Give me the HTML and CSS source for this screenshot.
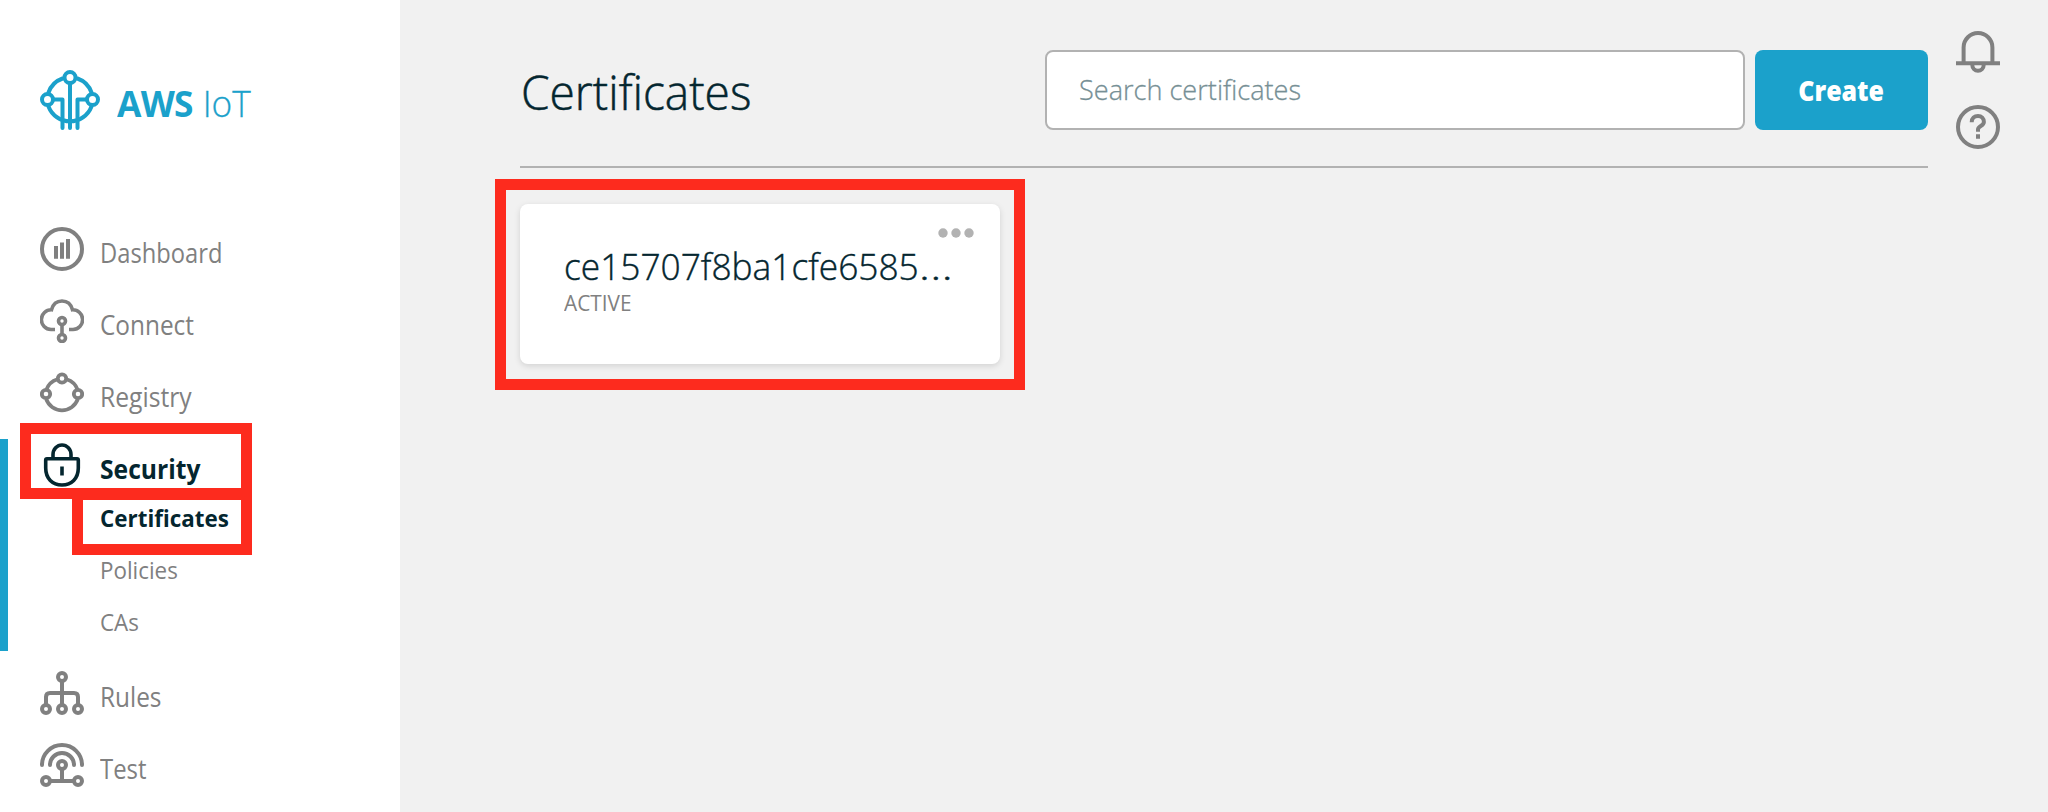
FILE: index.html
```html
<!DOCTYPE html>
<html lang="en">
<head>
<meta charset="utf-8">
<title>AWS IoT - Certificates</title>
<link rel="stylesheet" href="styles.css">
</head>
<body>
<div class="app">
  <aside class="sidebar">
    <div class="brand">
      <svg class="brand-icon" viewBox="0 0 60 60" fill="none" stroke="currentColor" stroke-width="4" stroke-linecap="round">
        <path d="M22.5 8.5A23 23 0 0 0 8.5 22.5M37.500 8.500A23 23 0 0 1 51.500 22.500M8.500 36.500A23 23 0 0 0 51.500 36.500"/>
        <circle cx="30" cy="7.500" r="5.500"/><circle cx="7.500" cy="29.500" r="5.500"/><circle cx="52.500" cy="29.500" r="5.500"/>
        <path d="M30 14V58M14 29.500H22.500V58M46 29.500H37.500V58" stroke-linejoin="round"/>
      </svg>
      <div class="brand-name"><b class="brand-aws">AWS</b><span class="brand-iot">IoT</span></div>
    </div>
    <nav class="nav">
      <a class="nav-row">
        <svg class="icon" viewBox="0 0 44 44" fill="none" stroke="currentColor" stroke-width="4"><circle cx="22" cy="22" r="20"/><path d="M16 19V31.700M22 15.500V31.700M28 12V31.700"/></svg>
        <span class="label dashboard">Dashboard</span>
      </a>
      <a class="nav-row">
        <svg class="icon" viewBox="0 0 44 44" fill="none" stroke="currentColor" stroke-width="3.600"><path d="M15 30.500H11A9.300 9.300 0 0 1 11.500 10.800C13 5 17 2 22 2S31 5 32.500 10.800A9.300 9.300 0 0 1 33 30.500H29"/><circle cx="22" cy="22" r="3.500"/><circle cx="22" cy="39" r="3.500"/><path d="M22 25.500V35.500"/></svg>
        <span class="label connect">Connect</span>
      </a>
      <a class="nav-row">
        <svg class="icon" viewBox="0 0 44 44" fill="none" stroke="currentColor" stroke-width="3.800"><circle cx="22" cy="7.500" r="4.200"/><circle cx="6" cy="23" r="4.200"/><circle cx="38" cy="23" r="4.200"/><path d="M17.500 7.500A17 17 0 0 0 6.200 18.500M26.500 7.500A17 17 0 0 1 37.800 18.500M6.200 27.500A16.800 16.800 0 0 0 37.800 27.500" transform="translate(0 .7)"/></svg>
        <span class="label registry">Registry</span>
      </a>
      <div class="nav-group">
        <a class="nav-row active">
          <svg class="icon" viewBox="0 0 44 44" fill="none" stroke="currentColor" stroke-width="3.600"><path d="M13 15.500V11.500A9 9.500 0 0 1 31 11.500V15.500M7 15.800H37Q38.300 15.800 38.300 17.100V25C38.300 35.500 31.500 42 22 42S5.700 35.500 5.700 25V17.100Q5.700 15.800 7 15.800ZM22 23.500V32.500"/></svg>
          <span class="label security">Security</span>
        </a>
        <a class="sub active"><span class="sub-text">Certificates</span></a>
        <a class="sub"><span class="sub-text">Policies</span></a>
        <a class="sub"><span class="sub-text">CAs</span></a>
      </div>
      <a class="nav-row">
        <svg class="icon" viewBox="0 0 44 44" fill="none" stroke="currentColor" stroke-width="4"><circle cx="22" cy="6" r="4"/><circle cx="6" cy="38" r="4"/><circle cx="22" cy="38" r="4"/><circle cx="38" cy="38" r="4"/><path d="M22 10V34M6 34V26Q6 22 10 22H34Q38 22 38 26V34"/></svg>
        <span class="label rules">Rules</span>
      </a>
      <a class="nav-row">
        <svg class="icon" viewBox="0 0 44 44" fill="none" stroke="currentColor" stroke-width="4"><path d="M2 22A20 20 0 0 1 42 22M10 22A12 12 0 0 1 34 22" stroke-linecap="round"/><circle cx="22" cy="22" r="4"/><circle cx="6" cy="38" r="4"/><circle cx="38" cy="38" r="4"/><path d="M22 26V38M10 38H34"/></svg>
        <span class="label test">Test</span>
      </a>
    </nav>
  </aside>
  <main class="main">
    <header class="header">
      <h1 class="title">Certificates</h1>
      <div class="search"><span class="placeholder">Search certificates</span></div>
      <button class="create"><span class="create-text">Create</span></button>
    </header>
    <section class="card">
      <svg class="more" viewBox="0 0 36 10" fill="currentColor"><circle cx="5" cy="5" r="4.700"/><circle cx="18" cy="5" r="4.700"/><circle cx="31" cy="5" r="4.700"/></svg>
      <div class="card-title">ce15707f8ba1cfe6585<span class="dots">…</span></div>
      <div class="card-status">ACTIVE</div>
    </section>
  </main>
  <div class="tools">
    <svg class="icon" viewBox="0 0 44 44" fill="none" stroke="currentColor" stroke-width="4"><path d="M7.600 32V16.400A14.400 14.400 0 0 1 36.400 16.400V32M0 32.300H44M16.300 34A5.700 5.700 0 0 0 27.700 34"/></svg>
    <svg class="icon" viewBox="0 0 44 44" fill="none" stroke="currentColor" stroke-width="4"><circle cx="22" cy="22" r="20"/><path d="M15.700 17.300C15.700 13 18.500 11 22 11S27.900 13.500 27.900 17C27.900 21 22 21 22 24.500V26.700M22 29.300V33.700"/></svg>
  </div>
  <div class="mark mark-security"></div>
  <div class="mark mark-certificates"></div>
  <div class="mark mark-card"></div>
</div>
</body>
</html>
```
FILE: styles.css
```css
* { box-sizing: border-box; }
body { margin: 0; font-family: "Open Sans", "Noto Sans", sans-serif; background: #f1f1f1; }
.app { position: relative; display: flex; width: 2048px; height: 812px; overflow: hidden; }
.sidebar { width: 400px; background: #fff; color: #808080; flex: none; }
.brand { display: flex; align-items: center; gap: 17px; height: 213px; padding: 70px 0 83px 40px; color: #1ba1cb; }
.brand-icon { width: 60px; height: 60px; }
.brand-name { display: flex; gap: 10px; font-size: 36px; line-height: 60px; padding-top: 7px; transform-origin: 0 50%; transform: scaleX(.98); }
.brand-aws { font-weight: 700; letter-spacing: -.7px; }
.brand-iot { font-weight: 300; -webkit-text-stroke: .3px currentColor; }
.nav-row { display: flex; align-items: center; gap: 16px; height: 72px; padding-left: 40px; }
.icon { width: 44px; height: 44px; flex: none; display: block; }
.label { font-size: 26.500px; line-height: 40px; padding-top: 8px; transform-origin: 0 50%; transform: scaleX(.92); }
.dashboard { transform: scaleX(.895); }
.registry, .security { transform: scaleX(.93); }
.test { transform: scaleX(.9); }
.nav-group { margin: 10px 0 6px; padding-bottom: 4px; border-left: 8px solid #1ba1cb; }
.nav-group .nav-row { height: 52px; padding-left: 32px; }
.sub { display: block; height: 52px; padding: 1px 0 0 92px; font-size: 24px; line-height: 52px; }
.sub-text { display: inline-block; transform-origin: 0 50%; transform: scaleX(.933); }
.active { color: #04262f; font-weight: 700; }
.main { width: 1528px; padding: 50px 0 0 120px; }
.header { display: flex; width: 1408px; height: 118px; border-bottom: 2px solid #b2b2b2; }
.title { width: 525px; margin: 0; padding: 3px 0 0 1px; font-size: 48px; font-weight: 300; line-height: 78px; color: #04262f; -webkit-text-stroke: .5px currentColor; transform-origin: 0 50%; transform: scaleX(.96); }
.search { flex: none; width: 700px; height: 80px; margin-right: 10px; padding-left: 32px; border: 2px solid #b2b2b2; border-radius: 8px; background: #fff; }
.placeholder { display: inline-block; font-size: 28px; font-weight: 300; line-height: 75px; color: #768f95; -webkit-text-stroke: .3px currentColor; transform-origin: 0 50%; transform: scaleX(.968); }
.create { width: 173px; height: 80px; padding: 0; border: 0; border-radius: 8px; background: #1ba1cb; color: #fff; font: 800 28px/78px "Open Sans", sans-serif; }
.create-text { display: inline-block; transform: scaleX(.89); }
.card { display: flex; flex-direction: column; width: 480px; height: 160px; margin-top: 36px; padding: 24px 26px 0 44px; border-radius: 8px; background: #fff; box-shadow: 0 2px 6px rgba(0,0,0,.13); }
.more { width: 36px; height: 10px; align-self: flex-end; color: #b2b2b2; }
.card-title { margin-top: 1px; font-size: 36px; font-weight: 300; line-height: 56px; color: #04262f; white-space: nowrap; -webkit-text-stroke: .4px currentColor; transform-origin: 0 50%; transform: scaleX(.98); }
.dots { display: inline-block; transform-origin: 0 50%; transform: scaleX(1.35); }
.card-status { margin-top: -9px; font-size: 22px; line-height: 32px; color: #808080; transform-origin: 0 50%; transform: scaleX(.945); }
.tools { display: flex; flex-direction: column; gap: 30px; padding: 31px 0 0 28px; color: #808080; }
.mark { position: absolute; border: 11px solid #fd2b1e; }
.mark-security { left: 20px; top: 423px; width: 232px; height: 76px; }
.mark-certificates { left: 72px; top: 488px; width: 180px; height: 67px; border-top-width: 12px; }
.mark-card { left: 495px; top: 179px; width: 530px; height: 211px; }
```
